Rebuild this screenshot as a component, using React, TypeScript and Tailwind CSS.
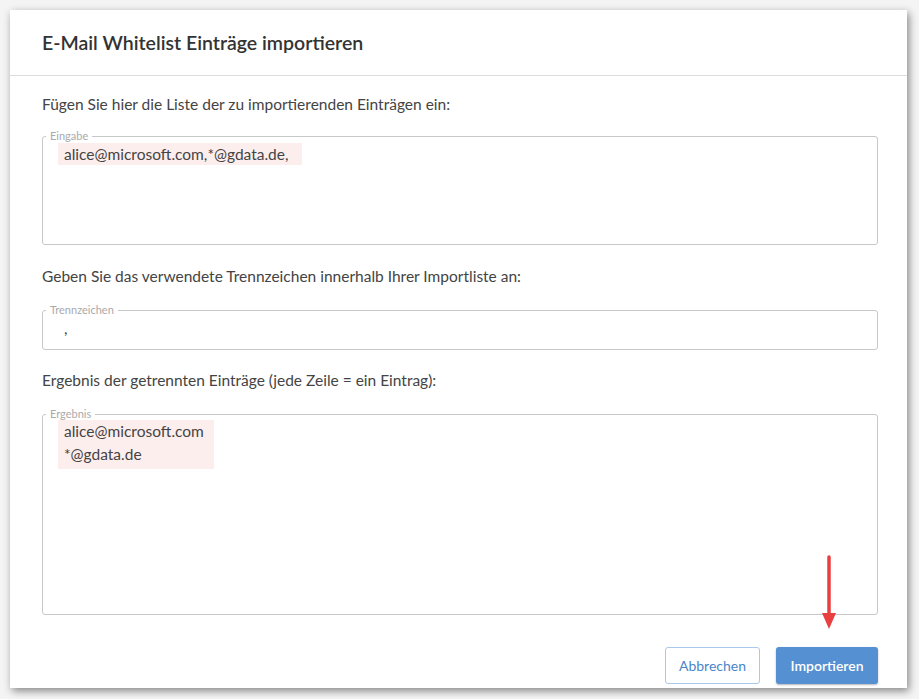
export default function App() {
  const f = { fontFamily: "Lato, 'Open Sans', sans-serif" };
  return (
    <div className="w-[919px] h-[699px] bg-[#f4f4f4] pt-[10px] pl-[10px]" style={f}>
      <div className="relative w-[897px] h-[678px] bg-white shadow-[2px_3px_8px_rgba(0,0,0,0.45)] flex flex-col">
        <div className="h-[66px] border-b border-[#dcdcdc] flex items-center pl-[32px] pt-[1px]">
          <h1 className="text-[19.5px] font-semibold text-[#333]">E-Mail Whitelist Einträge importieren</h1>
        </div>
        <div className="pl-[32px] pr-[29px] pt-[19px] text-[#444]">
          <p className="text-[15.5px] leading-[18px]">Fügen Sie hier die Liste der zu importierenden Einträgen ein:</p>
          <fieldset className="mt-[17px] h-[115px] border border-[#c8c8c8] rounded-[3px] px-[15px] pt-0">
            <legend className="text-[11px] text-[#aaa] px-[4px] -ml-[12px] leading-[12px]">Eingabe</legend>
            <span className="inline-block bg-[#fdeeee] px-[6px] text-[15.5px] leading-[22px] pr-[14px]">alice@microsoft.com,*@gdata.de,</span>
          </fieldset>
          <p className="mt-[22px] text-[15.5px] leading-[18px]">Geben Sie das verwendete Trennzeichen innerhalb Ihrer Importliste an:</p>
          <fieldset className="mt-[19px] h-[46px] border border-[#c8c8c8] rounded-[3px] px-[15px]">
            <legend className="text-[11px] text-[#aaa] px-[4px] -ml-[12px] leading-[12px]">Trennzeichen</legend>
            <span className="inline-block px-[6px] text-[15.5px] leading-[22px]">,</span>
          </fieldset>
          <p className="mt-[21px] text-[15.5px] leading-[18px]">Ergebnis der getrennten Einträge (jede Zeile = ein Eintrag):</p>
          <fieldset className="mt-[19px] h-[207px] border border-[#c8c8c8] rounded-[3px] px-[15px]">
            <legend className="text-[11px] text-[#aaa] px-[4px] -ml-[12px] leading-[12px]">Ergebnis</legend>
            <div className="inline-block bg-[#fdeeee] px-[6px] pr-[10px] pb-[3px] text-[15.5px] leading-[23px]">
              alice@microsoft.com<br />*@gdata.de
            </div>
          </fieldset>
          <div className="mt-[32px] flex justify-end gap-[16px]">
            <button className="w-[95px] h-[37px] border border-[#a9c8ec] rounded-[3px] text-[14px] text-[#4a86c9] bg-white">Abbrechen</button>
            <button className="w-[102px] h-[37px] rounded-[3px] text-[14px] font-semibold text-white bg-[#5590d2] shadow-[0_1px_2px_rgba(0,0,0,0.3)]">Importieren</button>
          </div>
        </div>
        <svg className="absolute left-[811px] top-[545px]" width="16" height="76" viewBox="0 0 16 76">
          <line x1="8" y1="2" x2="8" y2="62" stroke="#e84040" strokeWidth="3.5" strokeLinecap="round" />
          <polygon points="1,58 15,58 8,74" fill="#e84040" />
        </svg>
      </div>
    </div>
  );
}
